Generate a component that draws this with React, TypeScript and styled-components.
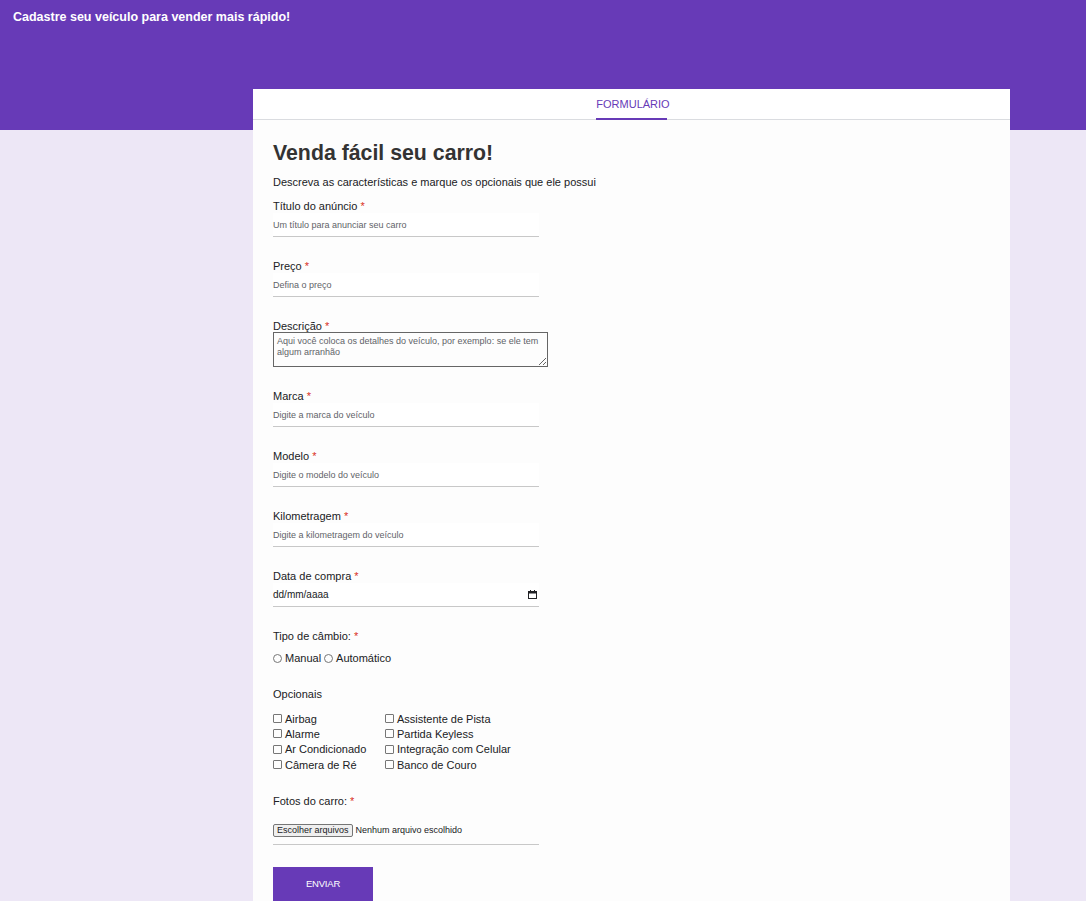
import React from "react";
import styled, { createGlobalStyle } from "styled-components";

const GlobalStyle = createGlobalStyle`
    body {
        margin: 0;
        background: #ede7f6;
        font-family: "Liberation Sans", Arial, sans-serif;
        color: #202124;
    }
`;

const Page = styled.div`
    min-height: 901px;
    background: linear-gradient(#673ab7 0, #673ab7 130px, #ede7f6 130px);
`;

const HeaderTitle = styled.h1`
    margin: 0;
    padding: 10px 13px 0;
    font-size: 12.5px;
    font-weight: bold;
    color: #fff;
    line-height: 15px;
`;

const Card = styled.div`
    width: 757px;
    margin: 64px 0 0 253px;
    background: #fdfdfd;
    min-height: 812px;
`;

const TabBar = styled.div`
    display: flex;
    justify-content: center;
    border-bottom: 1px solid #dadce0;
    height: 30px;
    background: #fff;
`;

const Tab = styled.div`
    position: relative;
    font-size: 11px;
    color: #673ab7;
    padding: 9px 0 0 3px;
    box-sizing: border-box;
    &::after {
        content: "";
        position: absolute;
        left: 3px;
        right: 3px;
        bottom: -1px;
        height: 2px;
        background: #673ab7;
    }
`;

const Form = styled.form`
    padding: 20px 20px 0;
`;

const Title = styled.h2`
    margin: 0;
    font-size: 21.3px;
    font-weight: bold;
    color: #333;
    line-height: 26px;
`;

const Subtitle = styled.p`
    margin: 9px 0 10px;
    font-size: 11px;
    line-height: 14px;
    color: #202124;
`;

const Field = styled.div`
    margin-bottom: 22px;
`;

const Label = styled.div`
    font-size: 11px;
    line-height: 14px;
    color: #202124;
`;

const Star = styled.span`
    color: #d93025;
`;

const TextInput = styled.input`
    display: block;
    width: 266px;
    height: 24px;
    box-sizing: border-box;
    border: none;
    border-bottom: 1px solid #c8c8c8;
    background: #fff;
    padding: 0;
    font-family: inherit;
    font-size: 9px;
    outline: none;
    &::placeholder {
        color: #5f6368;
    }
`;

const TextArea = styled.textarea`
    display: block;
    width: 275px;
    height: 35px;
    box-sizing: border-box;
    margin-top: -1px;
    border: 1px solid #666;
    padding: 3px 3px;
    font-family: inherit;
    font-size: 9px;
    line-height: 11px;
    resize: vertical;
    background: #fdfdfd;
    &::placeholder {
        color: #5f6368;
    }
`;

const DateBox = styled.div`
    display: flex;
    align-items: center;
    justify-content: space-between;
    width: 266px;
    height: 24px;
    box-sizing: border-box;
    border-bottom: 1px solid #c8c8c8;
    background: #fff;
    font-size: 10px;
    color: #202124;
    padding-right: 2px;
`;

const InlineRow = styled.div`
    display: flex;
    align-items: center;
    gap: 3px;
    font-size: 11px;
    line-height: 13px;
    margin-top: 9px;
`;

const Radio = styled.span`
    display: inline-block;
    width: 7px;
    height: 7px;
    border: 1px solid #767676;
    border-radius: 50%;
`;

const Box = styled.span`
    display: inline-block;
    width: 7px;
    height: 7px;
    border: 1px solid #767676;
    border-radius: 1px;
    margin-right: 3px;
`;

const OptGrid = styled.div`
    display: grid;
    grid-template-columns: 112px auto;
    grid-auto-flow: column;
    grid-template-rows: repeat(4, 15.3px);
    margin-top: 10px;
    width: fit-content;
`;

const Opt = styled.div`
    display: flex;
    align-items: center;
    font-size: 11px;
`;

const FileRow = styled.div`
    display: flex;
    align-items: flex-start;
    gap: 3px;
    width: 266px;
    height: 21px;
    margin-top: 16px;
    border-bottom: 1px solid #c8c8c8;
    font-size: 9px;
    line-height: 13px;
    box-sizing: border-box;
`;

const FileButton = styled.span`
    display: inline-block;
    background: #efefef;
    border: 1px solid #767676;
    border-radius: 2px;
    padding: 0 3px;
    line-height: 11px;
    font-size: 9px;
`;

const Submit = styled.button`
    width: 100px;
    height: 36px;
    padding: 0 0 3px;
    background: #673ab7;
    color: #fff;
    border: none;
    font-family: inherit;
    font-size: 9.5px;
    letter-spacing: -0.2px;
`;

const fields = [
    { label: "Título do anúncio", ph: "Um título para anunciar seu carro" },
    { label: "Preço", ph: "Defina o preço" },
];

const fields2 = [
    { label: "Marca", ph: "Digite a marca do veículo" },
    { label: "Modelo", ph: "Digite o modelo do veículo" },
    { label: "Kilometragem", ph: "Digite a kilometragem do veículo" },
];

const opcionais = [
    "Airbag",
    "Alarme",
    "Ar Condicionado",
    "Câmera de Ré",
    "Assistente de Pista",
    "Partida Keyless",
    "Integração com Celular",
    "Banco de Couro",
];

const CalendarIcon = () => (
    <svg width="9" height="9" viewBox="0 0 9 9">
        <rect x="0.5" y="1.5" width="8" height="7" fill="none" stroke="#202124" />
        <rect x="0.5" y="1.5" width="8" height="2" fill="#202124" />
        <rect x="2" y="0" width="1" height="2" fill="#202124" />
        <rect x="6" y="0" width="1" height="2" fill="#202124" />
    </svg>
);

const App = () => {
    return (
        <Page>
            <GlobalStyle />
            <HeaderTitle>Cadastre seu veículo para vender mais rápido!</HeaderTitle>
            <Card>
                <TabBar>
                    <Tab>FORMULÁRIO</Tab>
                </TabBar>
                <Form onSubmit={(e) => e.preventDefault()}>
                    <Title>Venda fácil seu carro!</Title>
                    <Subtitle>Descreva as características e marque os opcionais que ele possui</Subtitle>
                    {fields.map((f) => (
                        <Field key={f.label}>
                            <Label>{f.label} <Star>*</Star></Label>
                            <TextInput placeholder={f.ph} />
                        </Field>
                    ))}
                    <Field>
                        <Label>Descrição <Star>*</Star></Label>
                        <TextArea placeholder="Aqui você coloca os detalhes do veículo, por exemplo: se ele tem algum arranhão" />
                    </Field>
                    {fields2.map((f) => (
                        <Field key={f.label}>
                            <Label>{f.label} <Star>*</Star></Label>
                            <TextInput placeholder={f.ph} />
                        </Field>
                    ))}
                    <Field>
                        <Label>Data de compra <Star>*</Star></Label>
                        <DateBox>
                            <span>dd/mm/aaaa</span>
                            <CalendarIcon />
                        </DateBox>
                    </Field>
                    <Field>
                        <Label>Tipo de câmbio: <Star>*</Star></Label>
                        <InlineRow>
                            <Radio /> Manual <Radio /> Automático
                        </InlineRow>
                    </Field>
                    <Field>
                        <Label>Opcionais</Label>
                        <OptGrid>
                            {opcionais.map((o) => (
                                <Opt key={o}>
                                    <Box />
                                    {o}
                                </Opt>
                            ))}
                        </OptGrid>
                    </Field>
                    <Field>
                        <Label>Fotos do carro: <Star>*</Star></Label>
                        <FileRow>
                            <FileButton>Escolher arquivos</FileButton>
                            <span>Nenhum arquivo escolhido</span>
                        </FileRow>
                    </Field>
                    <Submit type="submit">ENVIAR</Submit>
                </Form>
            </Card>
        </Page>
    );
};

export default App;
